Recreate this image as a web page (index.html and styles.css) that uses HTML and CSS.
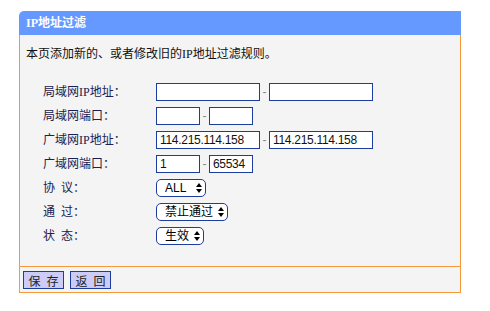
FILE: index.html
```html
<!doctype html>
<html>
<head>
<meta charset="utf-8">
<title>IP地址过滤</title>
<link rel="stylesheet" href="styles.css">
</head>
<body>
<div class="panel">
	<div class="panelHd">IP地址过滤</div>
	<div class="panelBd">
		<p class="desc">本页添加新的、或者修改旧的IP地址过滤规则。</p>
		<div class="form">
			<label>局域网IP地址：</label>
			<div class="ctrl"><input class="ip" type="text"><span class="dash">-</span><input class="ip" type="text"></div>

			<label>局域网端口：</label>
			<div class="ctrl"><input class="port" type="text"><span class="dash">-</span><input class="port" type="text"></div>

			<label>广域网IP地址：</label>
			<div class="ctrl"><input class="ip" type="text" value="114.215.114.158"><span class="dash">-</span><input class="ip" type="text" value="114.215.114.158"></div>

			<label>广域网端口：</label>
			<div class="ctrl"><input class="port" type="text" value="1"><span class="dash">-</span><input class="port" type="text" value="65534"></div>

			<label class="sp">协 议：</label>
			<div class="ctrl"><span class="sel w50"><select><option>ALL</option><option>TCP</option><option>UDP</option></select><svg class="arr" width="6" height="10" viewBox="0 0 6 10"><path d="M3 0L6 4H0z M3 10L6 6H0z" fill="#000"/></svg></span></div>

			<label class="sp">通 过：</label>
			<div class="ctrl"><span class="sel w72"><select><option>禁止通过</option><option>允许通过</option></select><svg class="arr" width="6" height="10" viewBox="0 0 6 10"><path d="M3 0L6 4H0z M3 10L6 6H0z" fill="#000"/></svg></span></div>

			<label class="sp">状 态：</label>
			<div class="ctrl"><span class="sel w48"><select><option>生效</option><option>失效</option></select><svg class="arr" width="6" height="10" viewBox="0 0 6 10"><path d="M3 0L6 4H0z M3 10L6 6H0z" fill="#000"/></svg></span></div>
		</div>
	</div>
	<div class="panelFt">
		<button type="button">保 存</button>
		<button type="button">返 回</button>
	</div>
</div>
</body>
</html>
```
FILE: styles.css
```css
*{ margin:0; padding:0}
body{ background:#fff; font:12px "Liberation Serif","Noto Sans CJK SC",serif; color:#202050;}
.panel{ width:442px; margin:11px 0 0 19px;}
.panelHd{ height:24px; line-height:24px; padding-left:7px; background:#6699ff; color:#fff; font-weight:bold; border-radius:5px 0 0 0;}
.panelBd{ background:#f4f4f4; border-left:1px solid #f59a3c; border-right:1px solid #f59a3c; border-bottom:1px solid #f59a3c; height:231px;}
.desc{ padding:12px 0 0 6px; line-height:14px; color:#111;}
.form{ display:grid; grid-template-columns:136px auto; grid-auto-rows:24px; margin-top:19px;}
.form label{ padding-left:23px; line-height:24px;}
.form label.sp{ word-spacing:3px;}
.ctrl{ display:flex; align-items:center;}
.ctrl input{ height:18px; box-sizing:border-box; border:1px solid #1c3c9e; background:#fff; font:12px "Liberation Sans",Arial,sans-serif; letter-spacing:-0.3px; color:#111; padding:0 3px; outline:none;}
.ctrl .ip{ width:104px;}
.ctrl .port{ width:44px;}
.dash{ width:9px; text-align:center; color:#888; font:12px "Liberation Sans",Arial,sans-serif;}
.sel{ position:relative; display:inline-block; height:18px;}
.sel select{ appearance:none; -webkit-appearance:none; height:18px; width:100%; box-sizing:border-box; border:1px solid #1c3c9e; border-radius:5px; background:#fff; padding:0 0 0 8px; font:12px "Liberation Sans","Noto Sans CJK SC",sans-serif; color:#000; outline:none;}
.sel .arr{ position:absolute; right:4px; top:4px; pointer-events:none;}
.w50{ width:50px;}
.w72{ width:72px;}
.w48{ width:48px;}
.panelFt{ background:#f4f4f4; border:1px solid #f59a3c; border-top:0; height:25px; display:flex; align-items:center; gap:6px; padding-left:3px;}
.panelFt button{ width:41px; height:18px; border:1px solid #1c3c9e; background:#ccccf7; font:12px "Liberation Serif","Noto Sans CJK SC",serif; color:#222; word-spacing:3px;}
```
